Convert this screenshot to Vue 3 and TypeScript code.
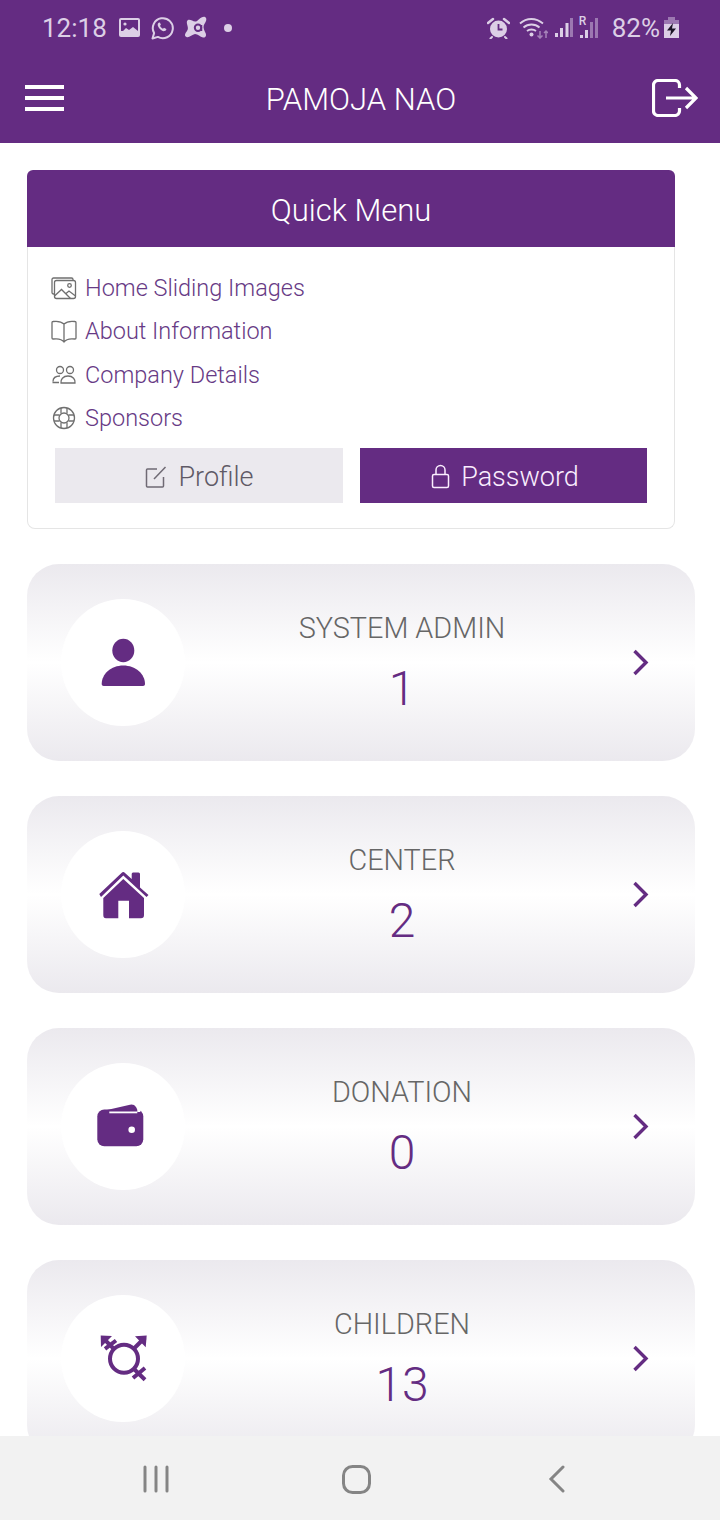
<script setup lang="ts">
type MenuLink = {
  icon: string
  label: string
}

type Stat = {
  icon: string
  label: string
  count: number
}

const links: MenuLink[] = [
  { icon: 'images', label: 'Home Sliding Images' },
  { icon: 'book', label: 'About Information' },
  { icon: 'people', label: 'Company Details' },
  { icon: 'support', label: 'Sponsors' }
]

const stats: Stat[] = [
  { icon: 'person', label: 'SYSTEM ADMIN', count: 1 },
  { icon: 'home', label: 'CENTER', count: 2 },
  { icon: 'wallet', label: 'DONATION', count: 0 },
  { icon: 'gender', label: 'CHILDREN', count: 13 }
]
</script>

<template>
  <div class="page">
    <header class="top">
      <div class="status">
        <span class="time">12:18</span>
        <svg class="st-image" width="21" height="20" viewBox="0 0 21 20">
          <rect width="21" height="19" rx="2" fill="#dccfe6" />
          <rect x="2" y="2" width="17" height="11" fill="#642c82" />
          <path d="M2 15l5-5 3 2 4-3 5 4v3H2z" fill="#dccfe6" />
          <circle cx="6" cy="6" r="1.6" fill="#dccfe6" />
        </svg>
        <svg class="st-whatsapp" width="24" height="24" viewBox="0 0 24 24">
          <path d="M2.500 22.500l1.600-5.400a10 10 0 1 1 3.800 3.800z" fill="none" stroke="#dccfe6" stroke-width="2" stroke-linejoin="round" />
          <path d="M8.600 6.800c-1.400 1-1.200 3 .4 5.200 1.700 2.300 4 3.600 5.600 3.100 1.200-.4 1.900-1.400 1.700-2.200l-2.300-1.200-1 1.100c-1.200-.4-2.500-1.700-3-3l.9-1-1-2.300z" fill="#dccfe6" />
        </svg>
        <svg class="st-avast" width="23" height="23" viewBox="0 0 23 23">
          <path d="M4 4C7 3 10 7 13 5 15 3.500 18 0 21 1 23 2 22.500 5 21 7 19 9.500 19 12 21 16 23 19 22 22 19 21.500 16 21 14 18 11 18 8 18.500 5 22 2.500 21 0 20 1 17.500 3 15 5.500 12 2 8 3 5z" fill="#dccfe6" />
          <circle cx="11" cy="12" r="6" fill="#dccfe6" />
          <circle cx="14" cy="11.700" r="3.200" fill="none" stroke="#642c82" stroke-width="2" />
          <path d="M17.500 9v6" stroke="#642c82" stroke-width="1.500" />
        </svg>
        <span class="dot"></span>
        <span class="status-gap"></span>
        <svg class="st-alarm" width="23" height="22" viewBox="0 0 23 22">
          <circle cx="11.500" cy="12" r="8.500" fill="#dccfe6" />
          <path d="M11.500 7v5.500h4" fill="none" stroke="#642c82" stroke-width="1.800" />
          <path d="M1 6l5-4M22 6l-5-4" stroke="#dccfe6" stroke-width="2.500" stroke-linecap="round" />
          <path d="M5 20l-1.500 1.500M18 20l1.500 1.500" stroke="#dccfe6" stroke-width="2" stroke-linecap="round" />
        </svg>
        <svg class="st-wifi" width="29" height="22" viewBox="0 0 29 22">
          <path d="M1 6.500c6.500-6 16-6 23 0M4.500 10.500c4.500-4 11.500-4 16 0M8 14c2.500-2 6.500-2 9 0" fill="none" stroke="#dccfe6" stroke-width="1.800" />
          <circle cx="12.500" cy="17.500" r="2" fill="#dccfe6" />
          <path d="M21 14v7M18.500 18.500l2.500 2.500 2.500-2.500" fill="none" stroke="#a583b9" stroke-width="1.500" />
          <path d="M27 21v-7M25 16l2-2 2 2" fill="none" stroke="#a583b9" stroke-width="1.500" />
        </svg>
        <svg class="st-signal" width="18" height="21" viewBox="0 0 18 21">
          <rect x="0" y="16" width="3" height="4" fill="#dccfe6" />
          <rect x="5" y="11" width="3" height="9" fill="#dccfe6" />
          <rect x="10.500" y="6" width="3" height="14" fill="#dccfe6" />
          <rect x="15" y="1" width="3" height="19" fill="#9c78b1" />
        </svg>
        <div class="st-roaming">
          <svg width="20" height="25" viewBox="0 0 20 25">
            <rect x="1" y="20" width="3" height="3" fill="#dccfe6" />
            <rect x="6" y="15" width="3" height="8" fill="#dccfe6" />
            <rect x="11" y="7" width="3" height="16" fill="#9c78b1" />
            <rect x="16" y="3" width="3" height="20" fill="#9c78b1" />
          </svg>
          <span class="roaming-r">R</span>
        </div>
        <span class="battery-text">82%</span>
        <svg class="st-battery" width="15" height="21" viewBox="0 0 15 21">
          <rect x="4" y="0" width="7" height="3" fill="#9c78b1" />
          <rect x="0" y="3" width="15" height="5" fill="#9c78b1" />
          <rect x="0" y="7" width="15" height="14" fill="#dccfe6" />
          <path d="M9 6L3 13.500h4L6 19l6-7.500H8z" fill="#1c1526" />
        </svg>
      </div>
      <div class="toolbar">
        <div class="burger"><i></i><i></i><i></i></div>
        <span class="title">PAMOJA NAO</span>
        <svg class="logout" width="46" height="38" viewBox="0 0 46 38">
          <path d="M27.500 9V6a4.500 4.500 0 0 0-4.500-4.500H6A4.500 4.500 0 0 0 1.500 6v26A4.500 4.500 0 0 0 6 36.500h17a4.500 4.500 0 0 0 4.500-4.500v-3" fill="none" stroke="#fff" stroke-width="3.200" />
          <path d="M14 19h29M34 9l10 10-10 10" fill="none" stroke="#fff" stroke-width="3.200" />
        </svg>
      </div>
    </header>

    <main class="content">
      <section class="quick">
        <h2 class="quick-title">Quick Menu</h2>
        <div class="quick-body">
          <div v-for="link in links" :key="link.label" class="link">
            <svg class="link-icon" width="26" height="26" viewBox="0 0 26 26" fill="none" stroke="#6f6f6f" stroke-width="1.300">
              <template v-if="link.icon === 'images'">
                <path d="M3 19H2.500A1.500 1.500 0 0 1 1 17.500v-13A1.500 1.500 0 0 1 2.500 3h18A1.500 1.500 0 0 1 22 4.500V5" />
                <rect x="3.500" y="5.500" width="21" height="18" rx="2" />
                <path d="M3.500 21l7-6.500 9 9M15 18.500l3-2.500 6.500 5" />
                <circle cx="18.500" cy="10.500" r="1.800" />
              </template>
              <template v-else-if="link.icon === 'book'">
                <path d="M13 6c-2-2-7-3-11-2.500-.6 0-1 .5-1 1V20c0 .6.500 1 1 1 4-.5 9 0 11 3 2-3 7-3.500 11-3 .5 0 1-.4 1-1V4.500c0-.5-.4-1-1-1C20 3 15 4 13 6zM13 6v18" />
              </template>
              <template v-else-if="link.icon === 'people'">
                <circle cx="9" cy="8" r="3.500" />
                <circle cx="19" cy="8" r="3.500" />
                <path d="M2 19.500c0-3.500 3-5.500 7-5.500M1.500 20.500H8M10 21h14c.6-3.500-2-7-7-7s-7.600 3.500-7 7z" />
              </template>
              <template v-else-if="link.icon === 'support'">
                <circle cx="13" cy="13" r="10.500" />
                <circle cx="13" cy="13" r="5" />
                <path d="M10 3v5.500M16 3v5.500M10 17.500V23M16 17.500V23M3 10h5.500M3 16h5.500M17.500 10H23M17.500 16H23" />
              </template>
            </svg>
            <span>{{ link.label }}</span>
          </div>
          <div class="actions">
            <button class="btn btn-light">
              <svg width="22" height="22" viewBox="0 0 22 22" fill="none" stroke="#6f6a74" stroke-width="1.500">
                <path d="M12 3H2.500a1 1 0 0 0-1 1v16a1 1 0 0 0 1 1h15a1 1 0 0 0 1-1v-9" />
                <path d="M9 13L20.500 1" />
              </svg>
              Profile
            </button>
            <button class="btn btn-dark">
              <svg width="19" height="25" viewBox="0 0 19 25" fill="none" stroke="#fbeeff" stroke-width="1.500">
                <rect x="1.500" y="10.500" width="16" height="13" rx="1.500" />
                <path d="M5 10.500V6a4.500 4.500 0 0 1 9 0v4.500" />
              </svg>
              Password
            </button>
          </div>
        </div>
      </section>

      <article v-for="stat in stats" :key="stat.label" class="stat">
        <div class="circle">
          <svg width="60" height="60" viewBox="0 0 60 60" fill="#642c82">
            <template v-if="stat.icon === 'person'">
              <ellipse cx="30.300" cy="17.500" rx="11" ry="11.800" />
              <path d="M8.700 51C8.700 41 18 32.500 30.300 32.500S52 41 52 51c0 1.200-.8 2-2 2H10.700c-1.200 0-2-.8-2-2z" />
            </template>
            <template v-else-if="stat.icon === 'home'">
              <path d="M6.300 29L28.500 8Q30.300 6 32 8L38.700 14V9Q38.700 7.500 40 7.500H45.500Q47 7.500 47 9V22.500L55.500 30 53.500 32 30.300 10.500 8 32z" />
              <path d="M30.300 14L51 33V50Q51 53.200 48 53.200H36V35.800H25.300V53.200H13Q10.300 53.200 10.300 50V33z" />
            </template>
            <template v-else-if="stat.icon === 'wallet'">
              <path d="M14 13L37 7.700Q41 7 43 10L45 14z" />
              <rect x="4.300" y="12.500" width="46" height="36.700" rx="7" />
              <rect x="16.300" y="14.500" width="28" height="1.800" fill="#fff" />
              <rect x="44.300" y="12" width="3" height="3" fill="#fff" />
              <circle cx="38.700" cy="32.800" r="3.300" fill="#fff" />
            </template>
            <template v-else>
              <g fill="none" stroke="#642c82" stroke-width="4">
                <circle cx="31" cy="29.800" r="14" />
                <path d="M21 20L10 9M41 19.500L52 8.500M41 40L52 50.800M40 49L52 39M12 19.800L23 11.500" />
              </g>
              <path d="M7.700 6.500L19 7 8 18zM53.700 6.500L42 7.200 52.700 18.200z" />
            </template>
          </svg>
        </div>
        <div class="stat-text">
          <span class="stat-label">{{ stat.label }}</span>
          <span class="stat-count">{{ stat.count }}</span>
        </div>
        <svg class="chevron" width="42" height="28" viewBox="0 0 42 28">
          <path d="M15.500 2L27 13.500 15.500 25" fill="none" stroke="#642c82" stroke-width="3.400" />
        </svg>
      </article>
    </main>

    <nav class="nav">
      <svg width="28" height="28" viewBox="0 0 28 28" fill="none" stroke="#858585" stroke-width="3" stroke-linecap="round">
        <path d="M3 2v24M14 2v24M25 2v24" />
      </svg>
      <svg class="nav-home" width="29" height="29" viewBox="0 0 29 29" fill="none" stroke="#858585" stroke-width="3">
        <rect x="1.500" y="1.500" width="26" height="26" rx="9" />
      </svg>
      <svg width="20" height="28" viewBox="0 0 20 28" fill="none" stroke="#858585" stroke-width="3" stroke-linecap="round">
        <path d="M16 2L4 14l12 12" />
      </svg>
    </nav>
  </div>
</template>

<style scoped>
.page {
  width: 720px;
  height: 1520px;
  display: flex;
  flex-direction: column;
  overflow: hidden;
  background: #fff;
  font-family: Roboto, "Liberation Sans", sans-serif;
  font-weight: 300;
}

.top {
  height: 143px;
  background: #642c82;
  flex: none;
}

.status {
  height: 55px;
  padding-left: 42px;
  padding-right: 41px;
  display: flex;
  align-items: center;
  color: #dccfe6;
  font-size: 26px;
  font-weight: 400;
}

.time {
  width: 77px;
}

.st-whatsapp {
  margin-left: 10px;
}

.st-avast {
  margin-left: 10px;
}

.dot {
  width: 8px;
  height: 8px;
  border-radius: 50%;
  background: #dccfe6;
  margin-left: 17px;
}

.status-gap {
  flex: 1;
}

.st-wifi {
  margin-left: 9px;
}

.st-signal {
  margin-left: 7px;
}

.st-roaming {
  position: relative;
  width: 20px;
  height: 25px;
  margin-left: 6px;
}

.roaming-r {
  position: absolute;
  left: 0;
  top: -1px;
  font-size: 12px;
  font-weight: 500;
  line-height: 14px;
}

.battery-text {
  margin-left: 13px;
}

.st-battery {
  margin-left: 4px;
}

.toolbar {
  height: 88px;
  padding: 0 22px 2px 25px;
  box-sizing: border-box;
  display: flex;
  align-items: center;
  justify-content: space-between;
  color: #fff;
}

.burger {
  width: 39px;
  display: flex;
  flex-direction: column;
  gap: 7px;
}

.burger i {
  display: block;
  height: 4px;
  background: #fff;
}

.title {
  font-size: 31px;
  line-height: 36px;
  margin-left: 6px;
  margin-top: 4px;
}

.content {
  flex: 1;
  min-height: 0;
  overflow: hidden;
  padding: 27px 25px 0 27px;
  display: flex;
  flex-direction: column;
  gap: 35px;
}

.quick {
  width: 648px;
  flex: none;
}

.quick-title {
  margin: 0;
  height: 77px;
  background: #642c82;
  border-radius: 6px 6px 0 0;
  color: #fff;
  font-size: 31px;
  font-weight: 300;
  line-height: 82px;
  text-align: center;
}

.quick-body {
  height: 282px;
  box-sizing: border-box;
  border: 1px solid #e5e5e5;
  border-top: 0;
  border-radius: 0 0 8px 8px;
  padding: 18.750px 27px 0 23px;
}

.link {
  height: 43.500px;
  display: flex;
  align-items: center;
  gap: 8px;
  color: #673a85;
  font-size: 23.500px;
}

.link-icon {
  flex: none;
}

.actions {
  display: flex;
  gap: 17px;
  margin-top: 8.250px;
  padding-left: 4px;
}

.btn {
  height: 55px;
  flex: none;
  box-sizing: border-box;
  border: 0;
  padding: 2px 0 0;
  display: flex;
  align-items: center;
  justify-content: center;
  gap: 11px;
  font-family: inherit;
  font-size: 27px;
  font-weight: 300;
}

.btn-light {
  width: 288px;
  background: #ebe9ee;
  color: #5f5a66;
  padding-left: 1px;
}

.btn-dark {
  width: 287px;
  background: #642c82;
  color: #fbeeff;
  padding-left: 3px;
}

.stat {
  width: 668px;
  height: 197px;
  flex: none;
  box-sizing: border-box;
  padding: 35px 34px;
  border-radius: 32px;
  display: flex;
  align-items: center;
  background: linear-gradient(to bottom, #ebe9ee 0%, #ffffff 50%, #ebe9ee 100%);
}

.circle {
  width: 124px;
  height: 127px;
  flex: none;
  border-radius: 50%;
  background: #fff;
  display: flex;
  align-items: center;
  justify-content: center;
}

.stat-text {
  flex: 1;
  padding-top: 3px;
  display: flex;
  flex-direction: column;
  align-items: center;
}

.stat-label {
  color: #666;
  font-size: 28.800px;
  line-height: 36px;
}

.stat-count {
  color: #642c82;
  font-size: 48px;
  line-height: 60px;
  margin-top: 13px;
}

.chevron {
  flex: none;
}

.nav {
  height: 84px;
  flex: none;
  box-sizing: border-box;
  background: #f2f2f2;
  padding: 2px 153px 0 142px;
  display: flex;
  align-items: center;
  justify-content: space-between;
}

.nav-home {
  margin-right: 5px;
}
</style>
